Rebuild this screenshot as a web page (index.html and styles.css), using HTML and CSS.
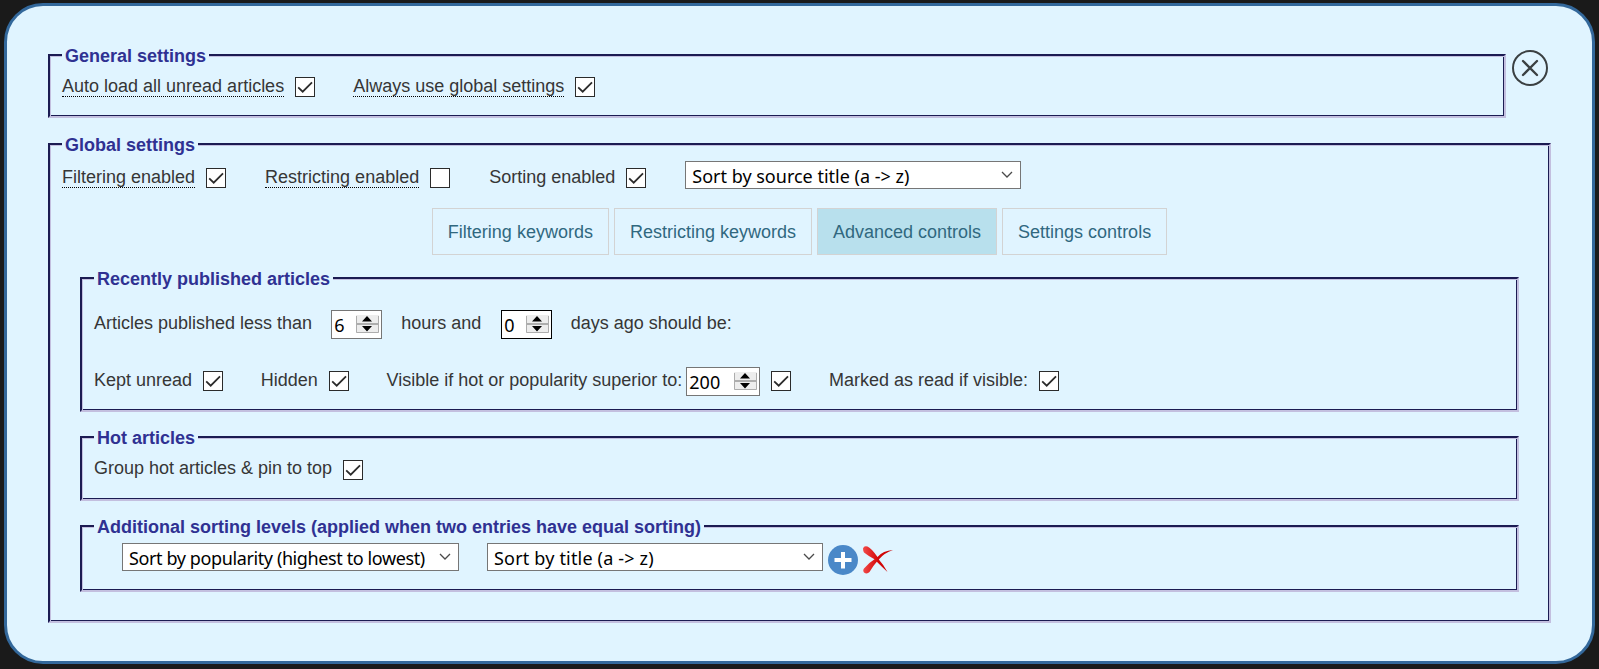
FILE: index.html
```html
<!DOCTYPE html>
<html lang="en">
<head>
<meta charset="utf-8">
<title>Settings</title>
<link rel="stylesheet" href="styles.css">
</head>
<body>
<svg class="defs" aria-hidden="true">
  <symbol id="tick" viewBox="1 1 18 18"><path d="M3.2 10.3 L7.7 14.700 L17 5.400" fill="none" stroke="#2b2b2b" stroke-width="1.8"/></symbol>
  <symbol id="chevron" viewBox="0 0 12 8"><path d="M1 1 L6 6 L11 1" fill="none" stroke="#4a4a4a" stroke-width="1.3"/></symbol>
  <symbol id="spinner" viewBox="0 0 23 18">
    <rect width="23" height="18" fill="#ededed"/>
    <path d="M.5 1V17.500H22.500V1" fill="none" stroke="#adadad"/>
    <path d="M0 9H23" stroke="#adadad" stroke-width="2"/>
    <path d="M6 6.500 L11 1 L16 6.500Z M6 11 L11 16.500 L16 11Z" fill="#000"/>
  </symbol>
</svg>
<main class="panel">
  <div class="top">
    <section class="group general">
      <h2 class="legend">General settings</h2>
      <div class="row">
        <span class="label hint">Auto load all unread articles</span><svg class="check"><use href="#tick"/></svg>
        <span class="label hint next">Always use global settings</span><svg class="check"><use href="#tick"/></svg>
      </div>
    </section>
    <svg class="close" viewBox="0 0 36 36"><g fill="none" stroke="#3b4042" stroke-width="2"><circle cx="18" cy="18" r="17"/><path d="M11 11 L25 25 M25 11 L11 25" stroke-width="2.3" stroke-linecap="round"/></g></svg>
  </div>
  <section class="group global">
    <h2 class="legend">Global settings</h2>
    <div class="row">
      <span class="label hint">Filtering enabled</span><svg class="check"><use href="#tick"/></svg>
      <span class="label hint next">Restricting enabled</span><svg class="check"></svg>
      <span class="label next">Sorting enabled</span><svg class="check"><use href="#tick"/></svg>
      <div class="select main-sort"><span class="value">Sort by source title (a -&gt; z)</span><svg class="chevron"><use href="#chevron"/></svg></div>
    </div>
    <nav class="tabs">
      <span class="tab">Filtering keywords</span>
      <span class="tab">Restricting keywords</span>
      <span class="tab active">Advanced controls</span>
      <span class="tab">Settings controls</span>
    </nav>
    <section class="group inner recent">
      <h2 class="legend">Recently published articles</h2>
      <div class="row">
        <span class="label">Articles published less than</span>
        <div class="number hours"><span class="value">6</span><svg class="spinner"><use href="#spinner"/></svg></div>
        <span class="label unit">hours and</span>
        <div class="number days"><span class="value">0</span><svg class="spinner"><use href="#spinner"/></svg></div>
        <span class="label unit">days ago should be:</span>
      </div>
      <div class="row">
        <span class="label">Kept unread</span><svg class="check"><use href="#tick"/></svg>
        <span class="label next">Hidden</span><svg class="check"><use href="#tick"/></svg>
        <span class="label next">Visible if hot or popularity superior to:</span>
        <div class="number popularity"><span class="value">200</span><svg class="spinner"><use href="#spinner"/></svg></div><svg class="check"><use href="#tick"/></svg>
        <span class="label next">Marked as read if visible:</span><svg class="check"><use href="#tick"/></svg>
      </div>
    </section>
    <section class="group inner hot">
      <h2 class="legend">Hot articles</h2>
      <div class="row">
        <span class="label">Group hot articles &amp; pin to top</span><svg class="check"><use href="#tick"/></svg>
      </div>
    </section>
    <section class="group inner sorting">
      <h2 class="legend">Additional sorting levels (applied when two entries have equal sorting)</h2>
      <div class="row">
        <div class="select first"><span class="value">Sort by popularity (highest to lowest)</span><svg class="chevron"><use href="#chevron"/></svg></div>
        <div class="select second"><span class="value">Sort by title (a -&gt; z)</span><svg class="chevron"><use href="#chevron"/></svg></div>
        <svg class="action" viewBox="0 0 30 30"><circle cx="15" cy="15" r="15" fill="#4a88c8"/><path d="M15 7V23.500M6.500 15H23.500" stroke="#fff" stroke-width="4"/></svg>
        <svg class="action remove" viewBox="0 0 30 30">
          <defs><linearGradient id="red" x1="0" y1="0" x2="1" y2="0"><stop offset="0" stop-color="#f24a4a"/><stop offset=".5" stop-color="#d40808"/><stop offset="1" stop-color="#c80000"/></linearGradient></defs>
          <path d="M0 3.500Q1 .5 4.500 1.600Q8 3 14.500 12Q20 5.500 30 5Q21 8 15.800 14.500Q20 19 24.500 27Q19 22 13.800 16.800Q10 21 6.500 27Q4 29.500 1 27.500Q-.5 25.500 1 23.500Q6 17.500 11.500 14.200Q6 11.500 1 7.500Q0 5.500 0 3.500Z" fill="url(#red)"/>
        </svg>
      </div>
    </section>
  </section>
</main>
</body>
</html>
```
FILE: styles.css
```css
* { box-sizing: border-box; }
body {
  margin: 0;
  height: 669px;
  padding: 3px 4px 5px;
  overflow: hidden;
  background: #1a1a1a;
  color: #363636;
  font: 18px/20px "Liberation Sans", Arial, sans-serif;
}
svg { display: block; flex: none; }
.defs { display: none; }
.panel {
  height: 661px;
  padding: 48px 41px 0;
  border: 3px solid #33689b;
  border-radius: 39px;
  background: #e0f4ff;
}
.top { display: flex; margin-bottom: 25px; gap: 6px; }
.group {
  padding: 0 12px;
  border: 2px solid #1b1b52;
  border-right-color: #c3bfdf;
  border-bottom-color: #c3bfdf;
  box-shadow: inset 1px 1px #c3bfdf, inset -1px -1px #1b1b52;
}
.legend {
  width: fit-content;
  margin: -10px 0 0;
  padding: 0 3px;
  background: #e0f4ff;
  color: #2f3192;
  font-size: 18px;
  font-weight: bold;
  line-height: 20px;
  white-space: nowrap;
}
.row { display: flex; align-items: flex-start; height: 20px; white-space: nowrap; }
.label { flex: none; }
.hint { height: 21px; border-bottom: 1px dotted #000; }
.next { margin-left: 38px; }
.check {
  width: 20px;
  height: 20px;
  margin: 1px 0 0 11px;
  border: 1px solid #2b2b2b;
  background: #fff;
}

.general { width: 1458px; height: 64px; }
.general .row { margin-top: 10px; }
.close { width: 36px; height: 36px; margin-top: -4px; }

.global { height: 480px; }
.global > .row { margin-top: 12px; }
.global > .row .next { margin-left: 39px; }

.select, .number {
  display: flex;
  flex: none;
  align-items: center;
  justify-content: space-between;
  border: 1px solid #767676;
  background: #fff;
  color: #000;
  font-family: "Noto Sans", sans-serif;
}
.select { width: 336px; height: 28px; padding: 1px 7px 0 6px; }
.chevron { width: 12px; height: 8px; margin-top: -2px; }
.main-sort { margin: -6px 0 0 39px; }

.tabs { display: flex; justify-content: center; gap: 5px; margin: 21px 0 22px; }
.tab {
  height: 47px;
  padding: 13px 15px 0;
  border: 1px solid #d3d3d3;
  color: #30687f;
}
.active { background: #b8e0ed; }

.inner { margin: 0 18px 24px; }
.recent { height: 135px; }
.recent .row { margin-top: 24px; }
.recent .row + .row { margin-top: 37px; }
.number { width: 51px; height: 29px; margin-top: -3px; padding: 1px 2px 0 2px; }
.spinner { width: 23px; height: 18px; margin-top: -3px; }
.hours { margin-left: 19px; }
.days { margin-left: 20px; border-color: #000; }
.unit { margin-left: 19px; }
.days + .unit { margin-left: 18.5px; }
.recent .next { margin-left: 37.7px; }
.popularity { width: 74px; margin-left: 4px; }

.hot { height: 65px; }
.hot .row { margin-top: 10px; }
.hot .check { margin-top: 2px; }

.sorting { height: 67px; margin-bottom: 0; }
.sorting .row { margin-top: 6px; }
.first { width: 337px; margin-left: 28px; letter-spacing: -.39px; }
.second { margin-left: 28px; letter-spacing: .18px; }
.action { width: 30px; height: 30px; margin: 2px 0 0 5px; }
```
